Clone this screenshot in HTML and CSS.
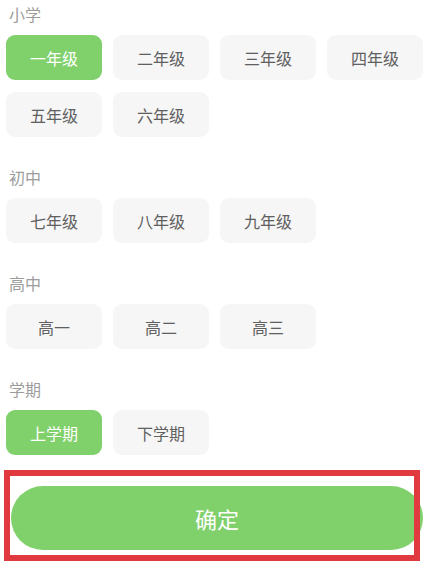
FILE: index.html
```html
<!DOCTYPE html>
<html lang="zh-CN">
<head>
<meta charset="utf-8">
<link rel="stylesheet" href="styles.css">
</head>
<body>
<div class="page">
  <section class="group">
    <div class="label">小学</div>
    <div class="grid">
      <div class="chip active">一年级</div>
      <div class="chip">二年级</div>
      <div class="chip">三年级</div>
      <div class="chip">四年级</div>
      <div class="chip">五年级</div>
      <div class="chip">六年级</div>
    </div>
  </section>
  <section class="group">
    <div class="label">初中</div>
    <div class="grid">
      <div class="chip">七年级</div>
      <div class="chip">八年级</div>
      <div class="chip">九年级</div>
    </div>
  </section>
  <section class="group">
    <div class="label">高中</div>
    <div class="grid">
      <div class="chip">高一</div>
      <div class="chip">高二</div>
      <div class="chip">高三</div>
    </div>
  </section>
  <section class="group last">
    <div class="label">学期</div>
    <div class="grid">
      <div class="chip active">上学期</div>
      <div class="chip">下学期</div>
    </div>
  </section>
  <div class="footer">
    <div class="confirm">确定</div>
    <div class="highlight"></div>
  </div>
</div>
</body>
</html>
```
FILE: styles.css
```css
html, body {
  margin: 0;
  padding: 0;
  background: #ffffff;
}
body {
  font-family: "Noto Sans CJK SC", "Noto Sans", sans-serif;
  width: 446px;
  height: 569px;
  overflow: hidden;
}
.page {
  padding: 4px 0 0 6px;
  width: 417px;
}
.group {
  margin-bottom: 30px;
}
.group.last {
  margin-bottom: 0;
}
.label {
  height: 20px;
  line-height: 20px;
  font-size: 16px;
  color: #9c9c9c;
  padding-left: 3px;
  margin-bottom: 11px;
}
.grid {
  display: grid;
  grid-template-columns: repeat(4, 96px);
  column-gap: 11px;
  row-gap: 12px;
}
.chip {
  height: 45px;
  border-radius: 9px;
  background: #f6f6f6;
  color: #606060;
  font-size: 16px;
  display: flex;
  align-items: center;
  justify-content: center;
}
.chip.active {
  background: #80d06b;
  color: #ffffff;
}
.footer {
  position: relative;
  padding-top: 15px;
  padding-bottom: 8px;
}
.confirm {
  margin: 16px 0 0 5px;
  height: 64px;
  border-radius: 32px;
  background: #80d06b;
  color: #ffffff;
  font-size: 22px;
  display: flex;
  align-items: center;
  justify-content: center;
}
.highlight {
  position: absolute;
  left: -2px;
  top: 15px;
  width: 404px;
  height: 79px;
  border: 6px solid #e03a40;
}
```
